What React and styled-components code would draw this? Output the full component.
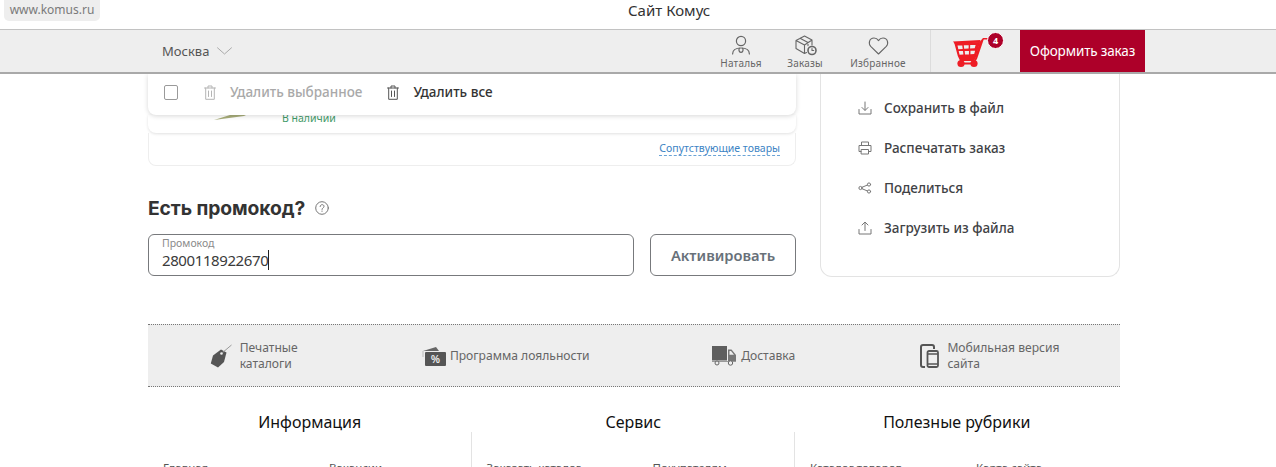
import React from "react";
import styled, { createGlobalStyle } from "styled-components";

const Global = createGlobalStyle`
  html, body { margin: 0; padding: 0; background: #fff; }
  body { width: 1276px; height: 467px; overflow: hidden; font-family: "Noto Sans", "Open Sans", sans-serif; color: #333; }
  * { box-sizing: border-box; }
`;

const Page = styled.div`width: 1276px; height: 467px; overflow: hidden; display: flex; flex-direction: column;`;
const TitleBar = styled.div`height: 29px; flex: none; display: flex; align-items: flex-start;`;
const UrlPill = styled.div`
  width: 96px; height: 21px; margin-left: 4px; background: #eeeeee; border-radius: 0 0 5px 5px;
  font: 12px "Noto Sans", sans-serif; color: #7a7a7a; text-align: center; line-height: 19px;
`;
const WindowTitle = styled.div`margin-left: 528px; font: 15px/20px "Noto Sans", sans-serif; color: #333;`;

const Header = styled.header`
  position: relative; z-index: 3; flex: none; height: 45px; background: #eeeeee;
  border-top: 1px solid #c2c2c2; border-bottom: 2px solid #a9a9a9; padding-left: 162px; display: flex; align-items: stretch;
`;
const City = styled.div`display: flex; align-items: center; gap: 8px; width: 540px; font: 13px "Noto Sans", sans-serif; color: #555; padding-bottom: 1px;`;
const NavList = styled.nav`position: relative; width: 229px; border-right: 1px solid #dcdcdc;`;
const NavItem = styled.div`
  position: absolute; top: 5px; left: ${p => p.$left}px; width: ${p => p.$w}px; display: flex; flex-direction: column; align-items: center;
  font: 10px/12px "Noto Sans", sans-serif; color: #666; letter-spacing: .2px; white-space: nowrap;
  svg { display: block; margin-bottom: 1px; }
`;
const CartArea = styled.div`position: relative; width: 89px; flex: none;`;
const Badge = styled.span`
  position: absolute; left: 56px; top: 2px; width: 17px; height: 17px; border-radius: 50%; background: #ad0029; border: 1px solid #fff;
  color: #fff; font: 700 9px/15px "Noto Sans", sans-serif; text-align: center;
`;
const CheckoutButton = styled.div`
  width: 125px; flex: none; background: #ad0029; color: #fff; display: flex; align-items: center; justify-content: center;
  font: 13.5px "Noto Sans", sans-serif; letter-spacing: -0.15px;
`;

const Main = styled.main`flex: none; width: 972px; margin-left: 148px; display: flex; gap: 24px; height: 250px;`;
const LeftCol = styled.div`width: 648px; flex: none;`;
const Toolbar = styled.div`
  position: relative; z-index: 2; height: 41px; background: #fff; border-radius: 0 0 8px 8px; box-shadow: 0 1px 5px rgba(0,0,0,.16);
  display: flex; align-items: center; padding: 0 0 5px 16px; font: 500 13.5px "Noto Sans", sans-serif;
`;
const Checkbox = styled.span`width: 14px; height: 15px; border: 1px solid #9a9a9a; border-radius: 2px; flex: none; margin-right: 26px; background:#fff;`;
const ToolAction = styled.span`
  display: flex; align-items: center; gap: 14px; color: ${p => (p.$muted ? "#a9a9a9" : "#333")}; margin-right: 25px; white-space: nowrap;
`;
const ProductCard = styled.div`
  height: 18px; border-radius: 0 0 8px 8px; box-shadow: 0 1px 3px rgba(0,0,0,.12); position: relative;
  font: 10.5px/13px "Noto Sans", sans-serif; color: #3f9a68; padding: 0 0 8px 134px; display: flex; align-items: flex-end;
`;
const ProductImg = styled.svg`position: absolute; left: 66px; top: 0;`;
const RelatedRow = styled.div`
  height: 33px; border: 1px solid #eee; border-top: none; border-radius: 0 0 8px 8px; display: flex; justify-content: flex-end; align-items: center; padding: 0 15px 1px;
`;
const RelatedLink = styled.span`font: 10.5px/13px "Noto Sans", sans-serif; color: #3c83c4; border-bottom: 1px dashed #6aa3d6;`;
const PromoTitleRow = styled.div`display: flex; align-items: center; gap: 10px; margin-top: 30px; height: 24px;`;
const PromoTitle = styled.h2`margin: 0; font: 700 19.3px/24px "Inter", sans-serif; color: #333; letter-spacing: -0.1px;`;
const PromoForm = styled.div`display: flex; gap: 16px; margin-top: 14px;`;
const PromoField = styled.div`
  width: 486px; height: 42px; border: 1px solid #77797c; border-radius: 6px; padding: 2px 13px; display: flex; flex-direction: column;
`;
const FieldLabel = styled.span`font: 10.5px/13px "Noto Sans", sans-serif; color: #8b8b8b;`;
const FieldValue = styled.span`font: 15px/20px "Noto Sans", sans-serif; color: #3b3b3b; letter-spacing: -0.4px; display: flex; align-items: center;`;
const Caret = styled.i`display: inline-block; width: 1px; height: 20px; background: #222;`;
const ActivateButton = styled.div`
  width: 146px; height: 42px; border: 1px solid #77797c; border-radius: 6px; display: flex; align-items: center; justify-content: center;
  font: 600 14.7px "Noto Sans", sans-serif; color: #687179;
`;
const SidePanel = styled.aside`
  width: 300px; height: 203px; border: 1px solid #e3e3e3; border-top: none; border-radius: 0 0 12px 12px; padding: 14px 0 0 37px;
  display: flex; flex-direction: column;
`;
const SideItem = styled.div`height: 40px; display: flex; align-items: center; gap: 12px; font: 500 13.5px "Noto Sans", sans-serif; color: #3f4245; white-space: nowrap;`;

const Band = styled.section`
  flex: none; width: 972px; height: 63px; margin-left: 148px; background: #eeeeee; border-top: 1px dotted #777; border-bottom: 1px dotted #777;
  display: flex; justify-content: space-around; align-items: center; font: 12.1px/16px "Noto Sans", sans-serif; color: #666; white-space: nowrap;
`;
const BandItem = styled.div`display: flex; align-items: center; gap: ${p => p.$gap}px; width: ${p => p.$w}px;`;
const Footer = styled.footer`flex: none; width: 972px; margin-left: 148px; display: grid; grid-template-columns: repeat(3, 323.5px); padding-top: 25px;`;
const FooterCol = styled.div`display: flex; flex-direction: column; height: 90px;`;
const FooterTitle = styled.h3`margin: 0; font: 400 16px/20px "Noto Sans", sans-serif; color: #111; text-align: center; height: 20px;`;
const FooterLinks = styled.div`
  flex: 1; padding: 29px 0 0 15px; border-right: ${p => (p.$last ? "none" : "1px solid #e3e3e3")};
  display: grid; grid-template-columns: 166px 1fr; font: 11.5px/14px "Noto Sans", sans-serif; color: #555;
`;

const ico = { fill: "none", stroke: "currentColor", strokeLinecap: "round", strokeLinejoin: "round" };

const Chevron = () => (
  <svg width="15" height="8" viewBox="0 0 15 8" style={{ color: "#aaa" }} {...ico}><path d="M.5.8 7.5 7 14.5.8" /></svg>
);
const UserIcon = () => (
  <svg width="20" height="20" viewBox="0 0 20 20" style={{ color: "#666", marginBottom: 2 }} {...ico} strokeWidth="1.2">
    <circle cx="10" cy="6" r="4.6" />
    <path d="M1.600 19c0-4.100 3.400-6 8.400-6s8.400 1.900 8.400 6" />
    <path d="M8.300 13.200c-.6 1.600-.6 3.800 1.700 4.300 2.300-.5 2.300-2.700 1.700-4.300" />
  </svg>
);
const OrdersIcon = () => (
  <svg width="22" height="21" viewBox="0 0 22 21" style={{ color: "#666", marginLeft: 2 }} {...ico} strokeWidth="1.100">
    <path d="M1 5.500 9.500 1 17 5v5M1 5.500v8l8.500 5 2-1M1 5.500l8.500 4.500L17 5M9.500 10v8.500M5 3.300l8 4.300v3" />
    <circle cx="17" cy="15.500" r="4" strokeWidth="1.600" />
    <path d="M17 13.500v2h1.700" />
  </svg>
);
const HeartIcon = () => (
  <svg width="21" height="18" viewBox="0 0 20 18" style={{ color: "#666", marginTop: 2, marginBottom: 2 }} {...ico} strokeWidth="1.100">
    <path d="M10 17 2.200 9.400C-.300 6.800.600 1 5.500 1 7.800 1 9.200 2.300 10 3.600 10.800 2.300 12.200 1 14.500 1c4.900 0 5.800 5.800 3.300 8.400Z" />
  </svg>
);
const Cart = () => (
  <svg width="38" height="30" viewBox="0 0 38 30" style={{ position: "absolute", left: 22, top: 8 }}>
    <path fill="#ee1c25" d="M0 3.500 27.500 2l-.8 2.600L2 6Z" />
    <path fill="#ee1c25" fillRule="evenodd" d="M1.300 5 27 4l-4.200 15.500-1.400 2.700H6.800L4.800 18Zm3.200 2.600.8 3.600 4.400-.2-.4-3.500Zm6.300-.3.4 3.400 4.400-.1.100-3.400Zm6.400-.2-.1 3.300 4.600-.1.900-3.400ZM5.700 13l.9 3.700 3.800-.1-.4-3.600Zm6 0 .3 3.500 3.900-.1.100-3.500Zm5.800-.2-.1 3.400 3.800-.1.900-3.400Z" />
    <path fill="#ee1c25" d="M26.500 4 30 0h6v1.600h-5.300L24 21l-1.500 2H7v-1.600h14.800Z" />
    <circle cx="8" cy="25.500" r="3.600" fill="#ee1c25" />
    <circle cx="21" cy="25.500" r="3.600" fill="#ee1c25" />
    <rect x="8" y="24.500" width="13" height="2" fill="#ee1c25" />
  </svg>
);
const Trash = ({ color }) => (
  <svg width="12" height="15" viewBox="0 0 12 15" style={{ color, flex: "none" }} {...ico} strokeWidth="1">
    <path d="M.5 3h11M4 3V1h4v2M1.700 3v11.300h8.600V3M4.500 6v5.500M7.500 6v5.500" />
  </svg>
);
const HelpIcon = () => (
  <svg width="14" height="14" viewBox="0 0 14 14" {...ico} style={{ color: "#777" }} strokeWidth="1">
    <circle cx="7" cy="7" r="6.300" />
    <path d="M5.100 5.500c0-2.500 3.900-2.500 3.900-.1 0 1.400-2 1.500-2 3" />
    <path d="M7 10v.4" />
  </svg>
);
const SideSvg = ({ children }) => (
  <svg width="14" height="14" viewBox="0 0 14 14" {...ico} style={{ color: "#777", flex: "none" }} strokeWidth="1">{children}</svg>
);
const TagIcon = () => (
  <svg width="22" height="24" viewBox="0 0 22 24" fill="#555" style={{ flex: "none" }}>
    <path d="M11 5.500 16.500 8.500 14 18 8 23.500 0.800 19.500 3 11.500Z" />
    <circle cx="11.500" cy="9.500" r="1.300" fill="#eee" />
    <path d="M12 9 21.500 1" stroke="#999" strokeWidth="1" fill="none" />
  </svg>
);
const PercentIcon = () => (
  <svg width="24" height="20" viewBox="0 0 24 20" style={{ flex: "none" }}>
    <path fill="#666" d="M1 5 14 1l3 4H1Z" />
    <path fill="#bbb" d="M.5 5h1v6h-1z" />
    <rect x="3" y="6" width="21" height="14" rx="1" fill="#555" />
    <text x="13.500" y="17" fontSize="10" fontWeight="700" fontFamily="Liberation Sans" fill="#eee" textAnchor="middle">%</text>
  </svg>
);
const TruckIcon = () => (
  <svg width="24" height="20" viewBox="0 0 24 20" style={{ flex: "none" }}>
    <rect x="0" y="0" width="15" height="14.500" fill="#5e5e5e" />
    <path fill="#777" d="M16 3.500h3.500l4.500 5.500v6H16Z" />
    <path fill="#eee" d="M17.500 5h1.500l3 3.700h-4.500Z" />
    <path fill="#999" d="M0 15h24v1H0Z" />
    <circle cx="5" cy="17" r="2" fill="#eee" stroke="#666" />
    <circle cx="18.500" cy="17" r="2.200" fill="#eee" stroke="#666" />
  </svg>
);
const PhoneIcon = () => (
  <svg width="19" height="24" viewBox="0 0 19 24" style={{ flex: "none" }} fill="none" stroke="#555">
    <path strokeWidth="2" d="M5 23H3a2 2 0 0 1-2-2V3a2 2 0 0 1 2-2h9a2 2 0 0 1 2 2v2" />
    <rect x="7.500" y="7" width="10.500" height="16" rx="1.500" strokeWidth="1.800" />
    <path strokeWidth="1.500" d="M8 10h10M8 20h10" />
  </svg>
);

export default function App() {
  return (
    <Page>
      <Global />
      <TitleBar>
        <UrlPill>www.komus.ru</UrlPill>
        <WindowTitle>Сайт Комус</WindowTitle>
      </TitleBar>
      <Header>
        <City>Москва <Chevron /></City>
        <NavList>
          <NavItem $left={16} $w={46}><UserIcon />Наталья</NavItem>
          <NavItem $left={80} $w={46}><OrdersIcon />Заказы</NavItem>
          <NavItem $left={141} $w={70}><HeartIcon />Избранное</NavItem>
        </NavList>
        <CartArea><Cart /><Badge>4</Badge></CartArea>
        <CheckoutButton>Оформить заказ</CheckoutButton>
      </Header>
      <Main>
        <LeftCol>
          <Toolbar>
            <Checkbox />
            <ToolAction $muted><Trash color="#b5b5b5" />Удалить выбранное</ToolAction>
            <ToolAction><Trash color="#555" />Удалить все</ToolAction>
          </Toolbar>
          <ProductCard>
            <ProductImg width="32" height="6" viewBox="0 0 32 6"><path fill="#a8ad7a" d="M0 5 30 1 32 0 16 0Z" /></ProductImg>
            В наличии
          </ProductCard>
          <RelatedRow><RelatedLink>Сопутствующие товары</RelatedLink></RelatedRow>
          <PromoTitleRow><PromoTitle>Есть промокод?</PromoTitle><HelpIcon /></PromoTitleRow>
          <PromoForm>
            <PromoField>
              <FieldLabel>Промокод</FieldLabel>
              <FieldValue>2800118922670<Caret /></FieldValue>
            </PromoField>
            <ActivateButton>Активировать</ActivateButton>
          </PromoForm>
        </LeftCol>
        <SidePanel>
          <SideItem><SideSvg><path d="M7 1v8M4 6.500 7 9.500l3-3M1 8.500v4.500h12V8.500" /></SideSvg>Сохранить в файл</SideItem>
          <SideItem><SideSvg><path d="M3.500 4V1h7v3M3 10.500H1V4.500h12v6h-2M3.500 8.500h7V13h-7Z" /></SideSvg>Распечатать заказ</SideItem>
          <SideItem><SideSvg><circle cx="2.500" cy="7" r="1.600" /><circle cx="11" cy="3.500" r="1.600" /><circle cx="11" cy="10.500" r="1.600" /><path d="M4 6.300 9.500 4M4 7.700 9.500 10" /></SideSvg>Поделиться</SideItem>
          <SideItem><SideSvg><path d="M7 9.500V1.500M4 4 7 1l3 3M1 8.500v4.500h12V8.500" /></SideSvg>Загрузить из файла</SideItem>
        </SidePanel>
      </Main>
      <Band>
        <BandItem $gap={8} $w={89}><TagIcon /><span>Печатные<br />каталоги</span></BandItem>
        <BandItem $gap={4} $w={167}><PercentIcon /><span>Программа лояльности</span></BandItem>
        <BandItem $gap={5} $w={85}><TruckIcon /><span>Доставка</span></BandItem>
        <BandItem $gap={8} $w={138}><PhoneIcon /><span>Мобильная версия<br />сайта</span></BandItem>
      </Band>
      <Footer>
        <FooterCol>
          <FooterTitle>Информация</FooterTitle>
          <FooterLinks><span>Главная</span><span>Вакансии</span></FooterLinks>
        </FooterCol>
        <FooterCol>
          <FooterTitle>Сервис</FooterTitle>
          <FooterLinks><span>Заказать каталог</span><span>Покупателям</span></FooterLinks>
        </FooterCol>
        <FooterCol>
          <FooterTitle>Полезные рубрики</FooterTitle>
          <FooterLinks $last><span>Каталог товаров</span><span>Карта сайта</span></FooterLinks>
        </FooterCol>
      </Footer>
    </Page>
  );
}
